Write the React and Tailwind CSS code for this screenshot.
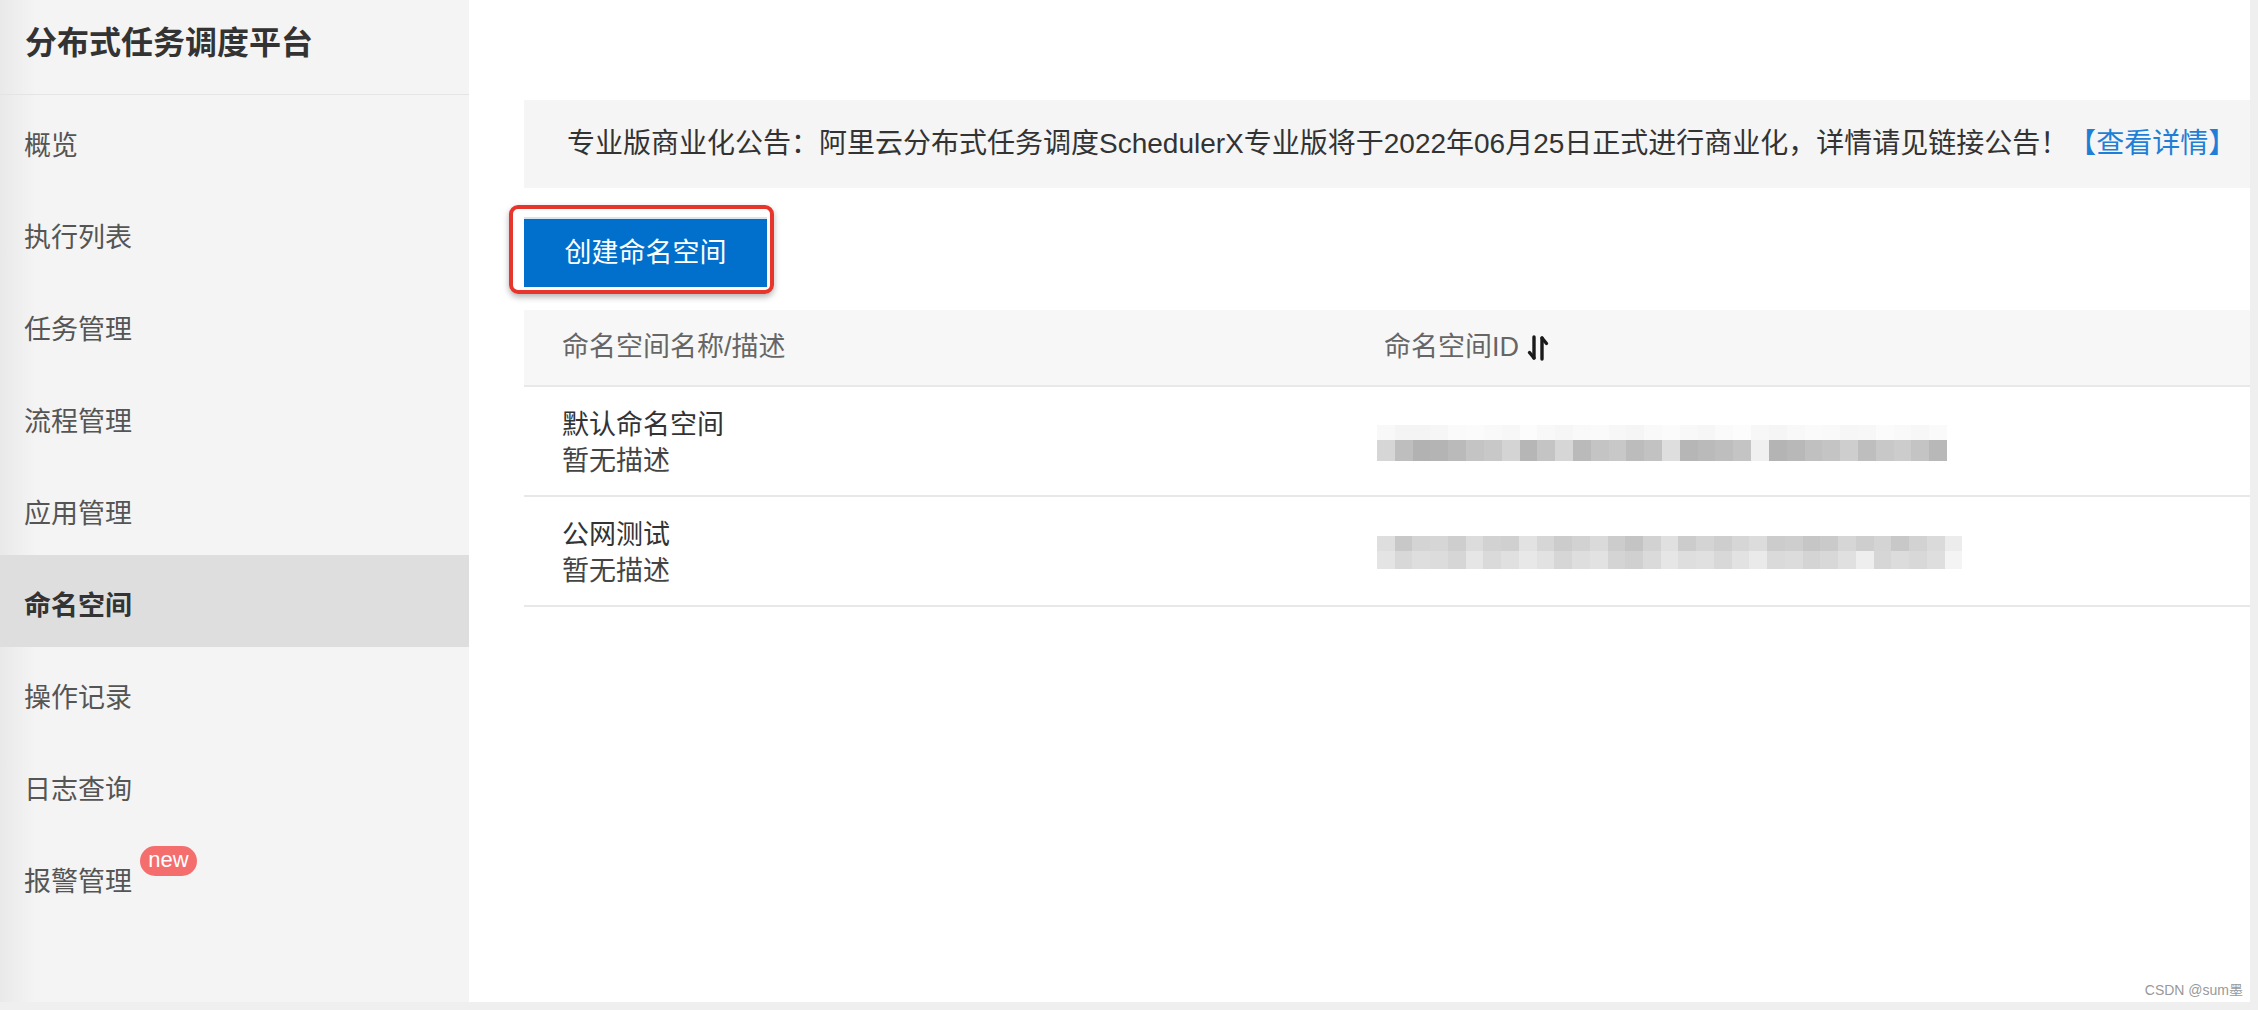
import React from 'react';

const FONT = { fontFamily: '"Liberation Sans", "Noto Sans CJK SC", sans-serif' };

const menu = [
  { id: 'overview', label: '概览' },
  { id: 'exec', label: '执行列表' },
  { id: 'task', label: '任务管理' },
  { id: 'flow', label: '流程管理' },
  { id: 'app', label: '应用管理' },
  { id: 'ns', label: '命名空间', active: true },
  { id: 'ops', label: '操作记录' },
  { id: 'log', label: '日志查询' },
  { id: 'alarm', label: '报警管理', badge: 'new' },
];

const rows = [
  {
    name: '默认命名空间',
    desc: '暂无描述',
    width: 570,
    // masked id, two strips of grey cells
    strips: [
      { h: 15, cells: [248, 244, 244, 246, 250, 251, 249, 247, 252, 248, 246, 249, 250, 247, 245, 249, 251, 248, 246, 250, 252, 247, 245, 248, 250, 249, 246, 247, 251, 249, 247, 250] },
      { h: 21, cells: [214, 190, 178, 180, 186, 196, 200, 212, 182, 196, 214, 186, 196, 200, 188, 194, 222, 182, 186, 190, 196, 240, 180, 184, 192, 196, 206, 190, 200, 204, 196, 184] },
    ],
  },
  {
    name: '公网测试',
    desc: '暂无描述',
    width: 585,
    strips: [
      { h: 15, cells: [222, 200, 212, 214, 206, 220, 210, 208, 226, 214, 204, 210, 218, 204, 196, 210, 224, 204, 212, 206, 214, 220, 204, 206, 198, 202, 214, 206, 212, 200, 210, 218, 236] },
      { h: 18, cells: [228, 216, 222, 220, 214, 230, 218, 224, 232, 226, 214, 222, 226, 212, 208, 218, 230, 222, 224, 216, 226, 234, 218, 220, 212, 216, 224, 238, 214, 220, 216, 222, 244] },
    ],
  },
];

function SortIcon() {
  return (
    <svg width="22" height="28" viewBox="0 0 22 28" fill="none" stroke="#1a1a1a" strokeWidth="3.4" strokeLinecap="round" strokeLinejoin="round">
      <path d="M7 3v21" />
      <path d="M2.5 18.5L7 24" />
      <path d="M15 25V4" />
      <path d="M15 4l4.5 5.5" />
    </svg>
  );
}

function MaskedId({ strips, width }) {
  return (
    <div className="flex flex-col" style={{ width }}>
      {strips.map((s, i) => (
        <div key={i} className="flex w-full" style={{ height: s.h }}>
          {s.cells.map((v, j) => (
            <div key={j} className="flex-1" style={{ backgroundColor: `rgb(${v},${v},${v})` }} />
          ))}
        </div>
      ))}
    </div>
  );
}

export default function App() {
  return (
    <div className="flex h-[1010px] w-full overflow-hidden bg-[#efefef]" style={FONT}>
      {/* Sidebar */}
      <aside className="flex h-[1002px] w-[469px] shrink-0 flex-col bg-[linear-gradient(to_right,#e9e9e9,#f4f4f4_36px)]">
        <div className="flex h-[95px] items-center border-b border-[#e4e4e4] pb-[8px] pl-[25px]">
          <h1 className="text-[32px] font-bold text-[#333]">分布式任务调度平台</h1>
        </div>
        <nav className="flex flex-col">
          {menu.map((item) => (
            <div
              key={item.id}
              className={`flex h-[92px] items-center pl-[24px] pt-[11px] text-[27px] ${
                item.active ? 'bg-[#dedede] font-bold text-[#333]' : 'text-[#555]'
              }`}
            >
              <span className="relative">
                {item.label}
                {item.badge && (
                  <span className="absolute -top-[16px] left-[116px] flex h-[30px] w-[57px] items-center justify-center rounded-full bg-[#f46e6e] pb-[3px] text-[22px] leading-none text-white">
                    {item.badge}
                  </span>
                )}
              </span>
            </div>
          ))}
        </nav>
      </aside>

      {/* Main */}
      <main className="mr-[8px] flex h-[1002px] flex-1 flex-col bg-white pl-[55px] pt-[100px]">
        {/* Notice */}
        <div className="flex h-[88px] items-center whitespace-nowrap bg-[#f5f5f5] pl-[43px] text-[28px] text-[#333]">
          <span>专业版商业化公告：阿里云分布式任务调度SchedulerX专业版将于2022年06月25日正式进行商业化，详情请见链接公告！</span>
          <span className="text-[#1f7fd6]">【查看详情】</span>
        </div>

        {/* Create button */}
        <div className="mt-[29px] flex">
          <div className="relative">
            <button className="relative z-10 flex h-[70px] w-[243px] items-center justify-center border-t-2 border-[#d8e4ee] bg-[#0070cc] text-[27px] text-white">
              创建命名空间
            </button>
            <div className="absolute -left-[15px] -top-[12px] h-[89px] w-[265px] rounded-[9px] border-4 border-[#e8352b] shadow-[0_3px_6px_rgba(0,0,0,0.3)]" />
          </div>
        </div>

        {/* Table */}
        <div className="mt-[23px] flex flex-col">
          <div className="grid h-[77px] grid-cols-[822px_1fr] items-center border-b-2 border-[#e8e8e8] bg-[#f7f7f7] text-[27px] text-[#666]">
            <div className="pl-[38px]">命名空间名称/描述</div>
            <div className="flex items-center gap-[8px] pl-[38px]">
              <span>命名空间ID</span>
              <SortIcon />
            </div>
          </div>
          {rows.map((r) => (
            <div key={r.name} className="grid h-[110px] grid-cols-[822px_1fr] items-center border-b-2 border-[#e8e8e8] pt-[3px] text-[27px] leading-[36px] text-[#333]">
              <div className="pl-[38px]">
                <div>{r.name}</div>
                <div className="text-[#444]">{r.desc}</div>
              </div>
              <div className="pl-[31px]">
                <MaskedId strips={r.strips} width={r.width} />
              </div>
            </div>
          ))}
        </div>

        <div className="flex-1" />
        <div className="flex justify-end pb-[1px] pr-[7px] text-[14px] text-[#999]">CSDN @sum墨</div>
      </main>
    </div>
  );
}
